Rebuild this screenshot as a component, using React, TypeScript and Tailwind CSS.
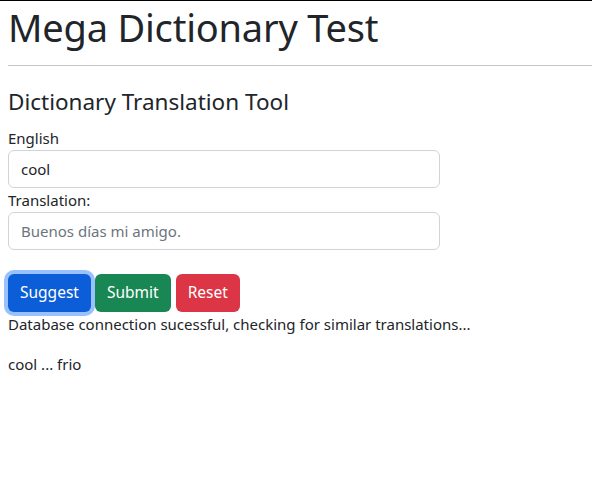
export default function App() {
  return (
    <div
      className="min-h-screen bg-white text-[#212529] border-t border-black overflow-hidden"
      style={{ fontFamily: '"Noto Sans", "Open Sans", sans-serif' }}
    >
      <div className="pl-2">
        <h1 className="mt-[2px] text-[38px] leading-[48px] font-normal tracking-[-0.2px]">Mega Dictionary Test</h1>
        <hr className="mt-[14px] border-t border-[#c6c6c6]" />
        <h2 className="mt-[21px] text-[22.5px] leading-[30px] font-normal">Dictionary Translation Tool</h2>

        <form className="mt-[9px] w-[432px]">
          <label className="block text-[15px] leading-6">English</label>
          <input
            type="text"
            defaultValue="cool"
            className="block w-full h-[38px] px-3 text-[15px] border border-[#ced4da] rounded-md outline-none"
          />
          <label className="block text-[15px] leading-6">Translation:</label>
          <input
            type="text"
            placeholder="Buenos días mi amigo."
            className="block w-full h-[38px] px-3 text-[15px] border border-[#ced4da] rounded-md outline-none placeholder:text-[#6c757d]"
          />
          <div className="flex gap-1 mt-6">
            <button
              type="button"
              className="h-[38px] px-3 rounded-md bg-[#0b5ed7] text-white text-[15.5px] ring-4 ring-[#98c1fe]"
            >
              Suggest
            </button>
            <button type="button" className="h-[38px] px-3 rounded-md bg-[#198754] text-white text-[15.5px]">
              Submit
            </button>
            <button type="button" className="ml-[1px] h-[38px] px-3 rounded-md bg-[#dc3545] text-white text-[15.5px]">
              Reset
            </button>
          </div>
        </form>

        <p className="text-[15px] leading-6">Database connection sucessful, checking for similar translations...</p>
        <p className="mt-4 text-[15px] leading-6">cool ... frio</p>
      </div>
    </div>
  );
}
